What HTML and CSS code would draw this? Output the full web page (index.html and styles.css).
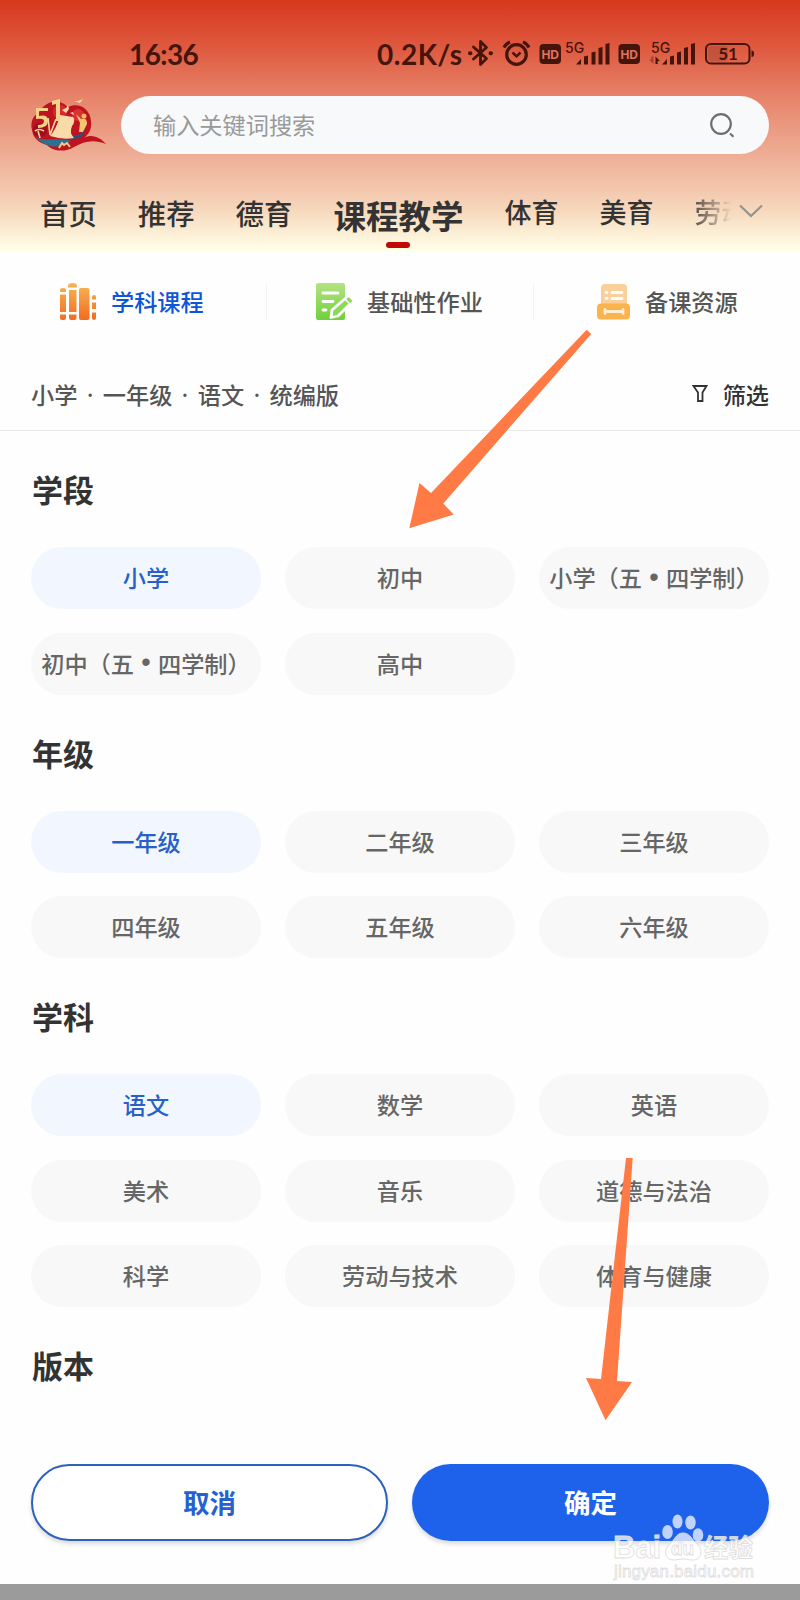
FILE: index.html
```html
<!DOCTYPE html>
<html lang="zh-CN">
<head>
  <meta charset="UTF-8">
  <meta name="viewport" content="width=device-width, initial-scale=1.0">
  <title>课程教学</title>
  <link rel="stylesheet" href="styles.css">
</head>
<body>
  <header class="header">
    <div class="status">
      <span class="time">16:36</span>
      <span class="speed">0.2K/s</span>
      <svg class="status-icons" width="292" height="30" viewBox="464 39 292 30">
        <!-- bluetooth -->
        <g fill="none" stroke="#45150c" stroke-width="2.8" stroke-linejoin="round" stroke-linecap="round">
          <path d="M473.500 47l13 11.500-6 6V41.500l6 6-13 11.500"/>
          <path d="M470 53.300h.5M490.500 53.300h.5" stroke-width="4"/>
        </g>
        <!-- alarm -->
        <g fill="none" stroke="#45150c" stroke-width="3.2">
          <circle cx="516.500" cy="54.500" r="9.800"/>
          <path d="M512.500 52.500l4 3.800 4-3.800" stroke-width="2.500"/>
          <path d="M504 47.500q2-4 6-5.500M529 47.500q-2-4-6-5.500"/>
        </g>
        <rect x="539.500" y="44" width="21.500" height="20" rx="4" fill="#45150c"/>
        <text x="550.200" y="58.500" class="hd">HD</text>
        <text x="565" y="52.500" class="net">5G</text>
        <g fill="#45150c">
          <path d="M576 64.500l5-5.500v5.500zM584 56.500l4-1v9h-4zM591.500 52.500l4-1v13h-4zM598.500 48l4-1v17.500h-4zM605.500 44l4-1v21.500h-4z"/>
          <rect x="618.500" y="44" width="21.500" height="20" rx="4"/>
          <path d="M662 64.500l5-5.500v5.500zM670 56.500l4-1v9h-4zM677 52.500l4-1v13h-4zM684 48l4-1v17.500h-4zM691 44l4-1v21.500h-4z"/>
          <path d="M655.500 56.500l4.500 4.500h-2.300v3h-2.200z"/>
          <path d="M653.500 64l-4.500-4.500h2.300v-3h2.200z" opacity=".4"/>
        </g>
        <text x="629.200" y="58.500" class="hd">HD</text>
        <text x="651" y="52.500" class="net">5G</text>
        <!-- battery -->
        <rect x="708" y="46" width="20" height="15.500" rx="3" fill="#b04c38" opacity=".6"/>
        <rect x="706" y="44" width="43.500" height="19.500" rx="5" fill="none" stroke="#45150c" stroke-width="2"/>
        <path d="M751.500 50.500q2.500 0 2.500 3.200t-2.500 3.200z" fill="#45150c"/>
        <text x="728" y="60" class="level">51</text>
      </svg>
    </div>

    <div class="search-row">
      <svg class="logo" width="76" height="56" viewBox="0 0 76 56">
        <path d="M2 33C0 25 3 19 9 15C16 3 30 1 38 10C48 5 60 11 61 24C62 32 59 37 54 41C62 36 71 41 76 47C64 42 54 44 44 50C34 56 22 54 17 48C9 46 3 41 2 33Z" fill="#bd1420"/>
        <circle cx="10" cy="33" r="7" fill="#9e0f1c"/>
        <circle cx="30" cy="15" r="7" fill="#d32a2b"/>
        <circle cx="48" cy="18" r="6" fill="#d83232"/>
        <path d="M5 40C16 45 26 40 41 44C32 51 19 51 13 46Z" fill="#2b7292"/>
        <path d="M40 37Q47 41 55 33Q53 42 42 42Z" fill="#324d78"/>
        <path d="M30 18L43 20Q46 24 42 29Q39 36 44 41Q33 43 20 39Q27 31 30 18Z" fill="#f8dba9"/>
        <path d="M6 11H18V14H9V19Q18 17 18 24Q18 31 8 31V28Q14 28 14 24Q14 21 6 22ZM22 4L30 2V24H26V7L22 8Z" fill="#f5d08b"/>
        <path d="M18 21L20 38L26 22M8 34L10 41M5 34Q9 31 14 34" fill="none" stroke="#f7d79e" stroke-width="1.600"/>
        <circle cx="54" cy="19" r="2.500" fill="#efb95f"/>
        <path d="M46 17L51 22Q57 20 57 27L53 35H49L50 26Z" fill="#f4c66f"/>
        <path d="M32 13l4-2 2-3 1 4-3 4zM40 16l3-1 1 3zM44 4l4 0 5-2-3 4z" fill="#f9d8a2"/>
        <path d="M29 51l3-5 2 2 3-2 3 4" fill="none" stroke="#f4c980" stroke-width="2"/>
      </svg>
      <div class="search">
        <span>输入关键词搜索</span>
        <svg width="26" height="26" viewBox="0 0 26 26" fill="none" stroke="#6d6e71" stroke-width="2.2">
          <circle cx="12" cy="12" r="9.800"/>
          <path d="M21 21.500l3.500 3.200"/>
        </svg>
      </div>
    </div>

    <nav class="tabs">
      <a class="tab">首页</a>
      <a class="tab">推荐</a>
      <a class="tab">德育</a>
      <a class="tab active">课程教学</a>
      <a class="tab small">体育</a>
      <a class="tab small">美育</a>
      <a class="tab small fade">劳动</a>
      <svg class="chevron" width="24" height="14" viewBox="0 0 24 14" fill="none" stroke="#96938e" stroke-width="2.2">
        <path d="M1 1.500l11 10.500 11-10.500"/>
      </svg>
    </nav>
  </header>

  <div class="subtabs">
    <a class="subtab active">
      <svg width="38" height="38" viewBox="0 0 38 38">
        <defs>
          <linearGradient id="orange" x1="0" y1="0" x2="0" y2="38" gradientUnits="userSpaceOnUse">
            <stop offset="0" stop-color="#f6b755"/>
            <stop offset="1" stop-color="#f36a20"/>
          </linearGradient>
        </defs>
        <g fill="url(#orange)">
          <path d="M1 9V7q0-2 3-2t3 2v2zM1 11.500h6V29H1zM1 31.500h6V35q0 2-2 2H3q-2 0-2-2zM9 4.500V3q0-3 4.500-3T18 3v1.500zM10 7h7.500v22H10zM10 31.500h7.500V35q0 2-2 2H12q-2 0-2-2z"/>
          <rect x="20" y="5" width="10.500" height="32" rx="2"/>
          <path d="M33 16.500V14q0-2 2-2t2 2v2.500zM33 19.500h4V26h-4zM33 29.500h4V35q0 2-2 2t-2-2z"/>
        </g>
      </svg>
      <span>学科课程</span>
    </a>
    <a class="subtab">
      <svg width="38" height="38" viewBox="0 0 38 38">
        <defs>
          <linearGradient id="green" x1="0" y1="0" x2="0" y2="1">
            <stop offset="0" stop-color="#b4e284"/>
            <stop offset="1" stop-color="#72d03a"/>
          </linearGradient>
        </defs>
        <rect x="1" y="0" width="29" height="37" rx="2" fill="url(#green)"/>
        <path d="M8 10h15M8 18.500h10M8 27h3" stroke="#fff" stroke-width="2.800" stroke-linecap="round"/>
        <path d="M16 34.500l1-7.500 15-13 5 5-14 14z" fill="#8bd85a" stroke="#fff" stroke-width="2.800" stroke-linejoin="round"/>
        <path d="M30 16l5 5" stroke="#fff" stroke-width="1.500"/>
        <path d="M32.500 15l4 4" stroke="#8bd85a" stroke-width="3"/>
      </svg>
      <span>基础性作业</span>
    </a>
    <a class="subtab">
      <svg width="34" height="36" viewBox="0 0 34 36">
        <rect x="4" y="0" width="26" height="24" rx="4" fill="#fbcf9a"/>
        <path d="M9 8.500h1M15 8.500h10M9 14.500h1M15 14.500h10" stroke="#fff" stroke-width="2.800" stroke-linecap="round"/>
        <rect x="0" y="19.500" width="33" height="16" rx="4" fill="#fbb34c"/>
        <path d="M8 27.500h18M8 25.500v4M26 25.500v4" stroke="#ffeed3" stroke-width="2.800" stroke-linecap="round"/>
      </svg>
      <span>备课资源</span>
    </a>
  </div>

  <div class="crumbs">
    <div class="path">小学<i>·</i>一年级<i>·</i>语文<i>·</i>统编版</div>
    <div class="filter">
      <svg width="16" height="17" viewBox="0 0 16 17" fill="none" stroke="#333" stroke-width="1.800">
        <path d="M1.500 1h13l-4 6.500V16H6V7.500z"/>
      </svg>
      <span>筛选</span>
    </div>
  </div>

  <main class="options">
    <h2>学段</h2>
    <div class="chips">
      <span class="chip on">小学</span>
      <span class="chip">初中</span>
      <span class="chip">小学（五<i>•</i>四学制）</span>
      <span class="chip">初中（五<i>•</i>四学制）</span>
      <span class="chip">高中</span>
    </div>

    <h2>年级</h2>
    <div class="chips">
      <span class="chip on">一年级</span>
      <span class="chip">二年级</span>
      <span class="chip">三年级</span>
      <span class="chip">四年级</span>
      <span class="chip">五年级</span>
      <span class="chip">六年级</span>
    </div>

    <h2>学科</h2>
    <div class="chips">
      <span class="chip on">语文</span>
      <span class="chip">数学</span>
      <span class="chip">英语</span>
      <span class="chip">美术</span>
      <span class="chip">音乐</span>
      <span class="chip">道德与法治</span>
      <span class="chip">科学</span>
      <span class="chip">劳动与技术</span>
      <span class="chip">体育与健康</span>
    </div>

    <h2>版本</h2>
  </main>

  <footer class="actions">
    <button class="btn cancel">取消</button>
    <button class="btn ok">确定</button>
  </footer>
  <div class="bottom-bar"></div>

  <!-- arrows and watermark lie over the page -->
  <svg class="overlay" width="800" height="1600" viewBox="0 0 800 1600">
    <g fill="#ff7a45">
      <path d="M586.700 329.700l4.500 4.300L443.300 503.500l10.400 11L409.300 528.300 419.500 483l11.500 10z"/>
      <path d="M626 1158h6.700L617 1381l15 1L605.500 1420.300 586 1378l15 1z"/>
    </g>
    <g class="mark">
      <g fill="#fff" fill-opacity=".72">
        <ellipse cx="667.500" cy="1532" rx="5.300" ry="7"/>
        <ellipse cx="677.500" cy="1521.500" rx="5" ry="7"/>
        <ellipse cx="690.500" cy="1522.500" rx="5.200" ry="7"/>
        <ellipse cx="698" cy="1535" rx="5.300" ry="6.800"/>
        <path d="M683 1533c7 0 9 7 14 11 7 6 4 16-4 16-5 0-6-1-10-1s-6 1-10 1c-8 0-10-10-4-15 6-5 7-12 14-12z" stroke="#dedede"/>
      </g>
      <text x="613" y="1558" class="mark-big" textLength="48">Bai</text>
      <text x="671" y="1555" class="mark-du" textLength="23">du</text>
      <text x="704" y="1557" class="mark-cn">经验</text>
      <text x="614" y="1577" class="mark-url" textLength="140">jingyan.baidu.com</text>
    </g>
  </svg>
</body>
</html>
```
FILE: styles.css
```css
* {
  box-sizing: border-box;
}
body {
  position: relative;
  width: 800px;
  height: 1600px;
  margin: 0;
  overflow: hidden;
  background: #fefefe;
  color: #333;
  font-family: "Noto Sans CJK SC", sans-serif;
  font-weight: 500;
  display: flex;
  flex-direction: column;
}
svg {
  display: block;
  flex: none;
}
i {
  font-style: normal;
}

/* header */
.header {
  height: 251px;
  background: linear-gradient(#d7381e 0, #df5b41 50px, #e68268 95px, #efb199 160px, #f6d6bb 208px, #ffffe6 250px);
}
.status {
  display: flex;
  align-items: center;
  height: 96px;
  padding: 12px 0 0 129px;
  color: #45150c;
  font-family: Lato, sans-serif;
  font-weight: 700;
  font-size: 28px;
}
.time {
  width: 248px;
  letter-spacing: -.6px;
}
.speed {
  width: 87px;
  letter-spacing: .5px;
}
.status-icons text {
  fill: #45150c;
}
.status-icons .hd {
  fill: #df745e;
  font: 700 12px Inter, sans-serif;
  text-anchor: middle;
}
.status-icons .net {
  font: 500 14px Inter, sans-serif;
}
.status-icons .level {
  font: 700 17px Lato, sans-serif;
  text-anchor: middle;
}
.search-row {
  display: flex;
  align-items: center;
  height: 58px;
  padding: 0 31px 0 30px;
}
.search {
  flex: 1;
  display: flex;
  align-items: center;
  justify-content: space-between;
  height: 58px;
  margin-left: 15px;
  padding: 0 34px 0 32px;
  border-radius: 29px;
  background: #f8f9fb;
  color: #999;
  font-size: 23.2px;
}
.search span {
  padding-bottom: 2px;
  font-weight: 400;
}
.tabs {
  display: flex;
  align-items: center;
  height: 97px;
  padding: 21px 0 0 40px;
}
.tab {
  margin-right: 41px;
  font-size: 28.400px;
  line-height: 40px;
}
.tab.active {
  position: relative;
  margin-top: 4px;
  font-size: 32.500px;
  font-weight: 700;
}
.tab.active::after {
  content: "";
  position: absolute;
  left: 53px;
  bottom: -13px;
  width: 24px;
  height: 6px;
  border-radius: 3px;
  background: #c00808;
}
.tab.small {
  margin-top: -2px;
  font-size: 27px;
}
.tab.fade {
  margin-right: -9px;
  color: transparent;
  background: linear-gradient(90deg, #55504a, rgba(85, 80, 74, 0) 38px);
  -webkit-background-clip: text;
  background-clip: text;
}
.chevron {
  margin-top: -5px;
}

/* sub tabs */
.subtabs {
  display: grid;
  grid-template-columns: 266px 267px 267px;
  height: 103px;
  padding-top: 32px;
}
.subtab {
  display: flex;
  align-items: center;
  gap: 14px;
  height: 38px;
  padding-left: 48px;
  border-left: 1px solid #f3f3f3;
  color: #555;
  font-size: 23.2px;
}
.subtab span {
  padding-bottom: 3px;
}
.subtab:first-child {
  padding-left: 59px;
  border-left: 0;
}
.subtab:last-child {
  padding-left: 63px;
}
.subtab.active {
  color: #0d55d9;
}

.crumbs {
  display: flex;
  justify-content: space-between;
  align-items: center;
  height: 77px;
  padding: 3px 31px 0;
  border-bottom: 1px solid #eaeaea;
  font-size: 23.2px;
}
.path {
  color: #555;
}
.path i {
  display: inline-block;
  width: 25.400px;
  text-align: center;
  font-family: "Noto Sans", sans-serif;
}
.filter {
  display: flex;
  align-items: center;
  gap: 15px;
}

/* options */
.options {
  padding: 0 31px;
}
h2 {
  margin: 0;
  padding: 36px 0 0 1px;
  height: 116px;
  font-size: 31px;
  line-height: 44px;
  font-weight: 700;
}
.chips {
  display: grid;
  grid-template-columns: repeat(3, 230px);
  gap: 23.600px 24px;
}
.chip {
  display: flex;
  align-items: center;
  justify-content: center;
  height: 62px;
  padding-bottom: 2px;
  border-radius: 31px;
  background: #f8f8f8;
  color: #666;
  font-size: 23.2px;
  white-space: nowrap;
}
.chip.on {
  background: #f2f7ff;
  color: #2860c8;
}
.chip i {
  width: 24px;
  text-align: center;
  font-family: "Liberation Sans", sans-serif;
  font-size: 27px;
}

/* buttons */
.actions {
  display: grid;
  grid-template-columns: 1fr 1fr;
  gap: 24px;
  margin-top: auto;
  padding: 0 31px 43px;
}
.btn {
  height: 77px;
  padding: 0 0 3px;
  border: 0;
  border-radius: 39px;
  font-family: inherit;
  font-size: 26.500px;
  font-weight: 700;
  box-shadow: 0 3px 4px rgba(0, 0, 0, .14);
}
.cancel {
  border: 2px solid #2b62bd;
  background: #fff;
  color: #2561d0;
}
.ok {
  background: #1e62ec;
  color: #fff;
}
.bottom-bar {
  height: 16px;
  background: #9b9b9b;
}

.overlay {
  position: absolute;
  left: 0;
  top: 0;
  pointer-events: none;
}
.mark text {
  fill: #fff;
  fill-opacity: .75;
  stroke: #dedede;
  stroke-width: .8px;
}
.mark .mark-big {
  font: 700 31px "Liberation Sans", sans-serif;
}
.mark .mark-du {
  font: 700 19px "Liberation Sans", sans-serif;
}
.mark .mark-cn {
  font: 700 24.500px "Noto Sans CJK SC", sans-serif;
}
.mark .mark-url {
  font: 400 17px "Liberation Sans", sans-serif;
}
```
